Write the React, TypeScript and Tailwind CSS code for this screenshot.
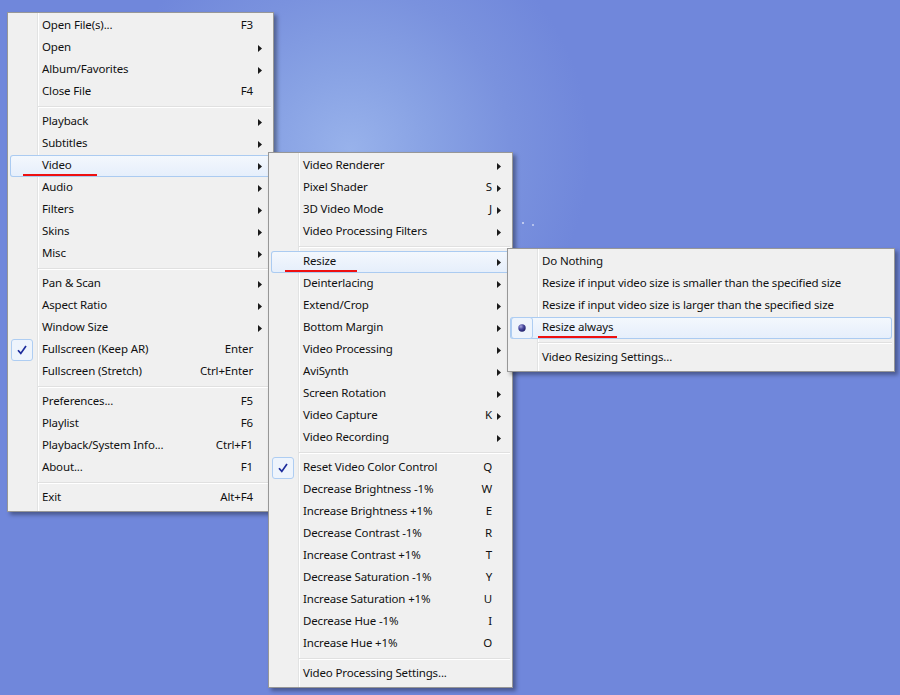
import React from "react";

type Item =
  | "sep"
  | {
      label: string;
      shortcut?: string;
      sub?: boolean;
      check?: boolean;
      radio?: boolean;
      hot?: boolean;
      mark?: { left: string; width: string };
    };

const mainMenu: Item[] = [
  { label: "Open File(s)...", shortcut: "F3" },
  { label: "Open", sub: true },
  { label: "Album/Favorites", sub: true },
  { label: "Close File", shortcut: "F4" },
  "sep",
  { label: "Playback", sub: true },
  { label: "Subtitles", sub: true },
  { label: "Video", sub: true, hot: true, mark: { left: "left-[13px]", width: "w-[74px]" } },
  { label: "Audio", sub: true },
  { label: "Filters", sub: true },
  { label: "Skins", sub: true },
  { label: "Misc", sub: true },
  "sep",
  { label: "Pan & Scan", sub: true },
  { label: "Aspect Ratio", sub: true },
  { label: "Window Size", sub: true },
  { label: "Fullscreen (Keep AR)", shortcut: "Enter", check: true },
  { label: "Fullscreen (Stretch)", shortcut: "Ctrl+Enter" },
  "sep",
  { label: "Preferences...", shortcut: "F5" },
  { label: "Playlist", shortcut: "F6" },
  { label: "Playback/System Info...", shortcut: "Ctrl+F1" },
  { label: "About...", shortcut: "F1" },
  "sep",
  { label: "Exit", shortcut: "Alt+F4" },
];

const videoMenu: Item[] = [
  { label: "Video Renderer", sub: true },
  { label: "Pixel Shader", shortcut: "S", sub: true },
  { label: "3D Video Mode", shortcut: "J", sub: true },
  { label: "Video Processing Filters", sub: true },
  "sep",
  { label: "Resize", sub: true, hot: true, mark: { left: "left-[14px]", width: "w-[72px]" } },
  { label: "Deinterlacing", sub: true },
  { label: "Extend/Crop", sub: true },
  { label: "Bottom Margin", sub: true },
  { label: "Video Processing", sub: true },
  { label: "AviSynth", sub: true },
  { label: "Screen Rotation", sub: true },
  { label: "Video Capture", shortcut: "K", sub: true },
  { label: "Video Recording", sub: true },
  "sep",
  { label: "Reset Video Color Control", shortcut: "Q", check: true },
  { label: "Decrease Brightness -1%", shortcut: "W" },
  { label: "Increase Brightness +1%", shortcut: "E" },
  { label: "Decrease Contrast -1%", shortcut: "R" },
  { label: "Increase Contrast +1%", shortcut: "T" },
  { label: "Decrease Saturation -1%", shortcut: "Y" },
  { label: "Increase Saturation +1%", shortcut: "U" },
  { label: "Decrease Hue -1%", shortcut: "I" },
  { label: "Increase Hue +1%", shortcut: "O" },
  "sep",
  { label: "Video Processing Settings..." },
];

const resizeMenu: Item[] = [
  { label: "Do Nothing" },
  { label: "Resize if input video size is smaller than the specified size" },
  { label: "Resize if input video size is larger than the specified size" },
  { label: "Resize always", radio: true, hot: true, mark: { left: "left-[28px]", width: "w-[79px]" } },
  "sep",
  { label: "Video Resizing Settings..." },
];

function Arrow() {
  return (
    <svg width="4" height="7" viewBox="0 0 4 7" className="block">
      <path d="M0 0 L4 3.5 L0 7 Z" fill="#1a1a1a" />
    </svg>
  );
}

function CheckIcon() {
  return (
    <svg width="10" height="10" viewBox="0 0 10 10" className="block">
      <path d="M1 5.2 L3.8 8.4 L9 1" fill="none" stroke="#1d2c9c" strokeWidth="1.7" />
    </svg>
  );
}

function RadioIcon() {
  return (
    <svg width="8" height="8" viewBox="0 0 8 8" className="block">
      <defs>
        <radialGradient id="bullet" cx="0.35" cy="0.3" r="0.7">
          <stop offset="0" stopColor="#a8a8e0" />
          <stop offset="0.5" stopColor="#4a4aa0" />
          <stop offset="1" stopColor="#24246e" />
        </radialGradient>
      </defs>
      <circle cx="4" cy="4" r="3.7" fill="url(#bullet)" />
    </svg>
  );
}

function Menu({ items, className }: { items: Item[]; className: string }) {
  return (
    <div
      className={`absolute border border-[#979797] bg-[#f0f0f0] bg-[linear-gradient(to_right,transparent_29px,#e2e3e3_29px,#e2e3e3_30px,#ffffff_30px,#ffffff_31px,transparent_31px)] p-[2px] shadow-[3px_3px_4px_rgba(0,0,0,0.35)] ${className}`}
    >
      {items.map((item, i) => {
        if (item === "sep") {
          return (
            <div key={i} className="flex h-[8px] items-center pl-[28px]">
              <div className="h-[2px] w-full border-t border-b border-t-[#e0e0e0] border-b-white" />
            </div>
          );
        }
        return (
          <div
            key={i}
            className={`relative flex h-[22px] items-center rounded-[3px] ${
              item.hot
                ? "bg-gradient-to-b from-[#f4f8fd] to-[#e5eefb] shadow-[inset_0_0_0_1px_#abcbf1]"
                : ""
            }`}
          >
            <div className="flex w-[32px] shrink-0 items-center pl-px">
              {(item.check || item.radio) && (
                <div className="flex h-[22px] w-[22px] items-center justify-center rounded-[3px] border border-[#aecdf2] bg-[#eef4fc]">
                  {item.check ? <CheckIcon /> : <RadioIcon />}
                </div>
              )}
            </div>
            <span className="flex-1 whitespace-nowrap pb-[2px]">{item.label}</span>
            {item.shortcut && <span className="whitespace-nowrap pb-[2px]">{item.shortcut}</span>}
            <div className="flex w-[18px] shrink-0 items-center pl-[5px]">
              {item.sub && <Arrow />}
            </div>
            {item.mark && (
              <div className={`absolute top-[19px] h-[2px] bg-[#ee1010] ${item.mark.left} ${item.mark.width}`} />
            )}
          </div>
        );
      })}
    </div>
  );
}

export default function App() {
  return (
    <div className="relative h-[695px] w-[900px] overflow-hidden bg-[#7087db] bg-[radial-gradient(circle_at_350px_150px,#98b2eb_0px,#88a2e4_80px,#7a92de_160px,#7087db_240px)] font-['Noto_Sans',sans-serif] text-[11.5px] leading-none tracking-[-0.15px] text-[#111]">
      <div className="absolute left-[522px] top-[222px] h-[2px] w-[2px] rounded-full bg-white/70" />
      <div className="absolute left-[532px] top-[224px] h-[2px] w-[2px] rounded-full bg-white/60" />
      <Menu items={mainMenu} className="left-[7px] top-[12px] w-[267px]" />
      <Menu items={videoMenu} className="left-[268px] top-[152px] w-[245px]" />
      <Menu items={resizeMenu} className="left-[507px] top-[248px] w-[388px]" />
    </div>
  );
}
